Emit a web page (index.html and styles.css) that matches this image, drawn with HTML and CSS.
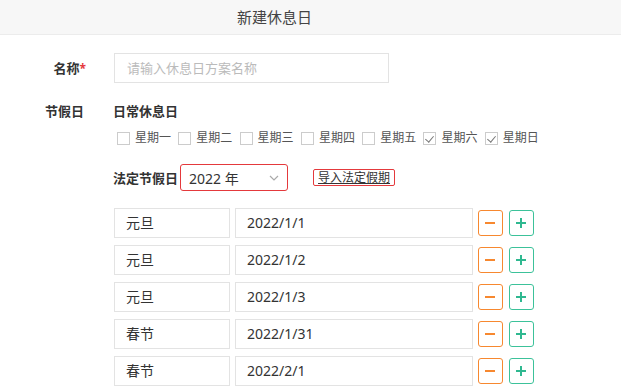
FILE: index.html
```html
<html>
    <head>
        <title>新建休息日</title>
        <link rel="stylesheet" href="styles.css">
    </head>
    <body>
        <div class="header">
            <h1>新建休息日</h1>
        </div>
        <div class="form">
            <div class="field">
                <label class="lbl">名称<span class="req">*</span></label>
                <input type="text" class="name-input" placeholder="请输入休息日方案名称">
            </div>

            <div class="field holiday">
                <label class="lbl">节假日</label>
                <div class="content">
                    <div class="sub">日常休息日</div>
                    <div class="weekdays">
                        <span class="day"><i class="box"></i>星期一</span>
                        <span class="day"><i class="box"></i>星期二</span>
                        <span class="day"><i class="box"></i>星期三</span>
                        <span class="day"><i class="box"></i>星期四</span>
                        <span class="day"><i class="box"></i>星期五</span>
                        <span class="day"><i class="box on"></i>星期六</span>
                        <span class="day"><i class="box on"></i>星期日</span>
                    </div>

                    <div class="legal">
                        <span class="sub">法定节假日</span>
                        <div class="select">
                            <span>2022 年</span>
                            <svg width="10" height="6" viewBox="0 0 10 6"><path d="M1 1l4 4 4-4" fill="none" stroke="#aaa" stroke-width="1.2"/></svg>
                        </div>
                        <a class="import" href="#">导入法定假期</a>
                    </div>

                    <div id="rows"></div>
                </div>
            </div>
        </div>

        <script>
            var days = [
                ["元旦", "2022/1/1"],
                ["元旦", "2022/1/2"],
                ["元旦", "2022/1/3"],
                ["春节", "2022/1/31"],
                ["春节", "2022/2/1"]
            ];
            var rows = document.getElementById("rows");
            days.forEach(function(d){
                var row = document.createElement("div");
                row.className = "row";
                row.innerHTML = '<div class="cell hname">' + d[0] + '</div>' +
                    '<div class="cell hdate">' + d[1] + '</div>' +
                    '<span class="btn minus"><i></i></span>' +
                    '<span class="btn plus"><i></i><i class="v"></i></span>';
                rows.appendChild(row);
            });
        </script>
    </body>
</html>
```

FILE: styles.css
```css
* {
    box-sizing: border-box;
}
body {
    margin: 0;
    background: #ffffff;
    font-family: "Noto Sans", "Noto Sans CJK SC", sans-serif;
    color: #333333;
}
.header {
    height: 35px;
    background-color: #f7f7f7;
    border-bottom: 1px solid #ececec;
    padding-left: 237px;
}
.header h1 {
    margin: 0;
    font-size: 15px;
    font-weight: normal;
    line-height: 34px;
    color: #444444;
}

/*Main*/
.form {
    padding-top: 18px;
}
.field {
    display: flex;
    align-items: flex-start;
}
.lbl {
    width: 86px;
    text-align: right;
    font-size: 13px;
    font-weight: bold;
    color: #333333;
    line-height: 30px;
    margin-right: 27px;
}
.req {
    color: #e4393c;
    font-size: 12px;
}
.name-input {
    width: 275px;
    height: 30px;
    border: 1px solid #e3e3e3;
    padding-left: 12px;
    font-family: inherit;
    font-size: 13px;
    margin-left: 1px;
}
.name-input::placeholder {
    color: #bbbbbb;
}

.holiday {
    margin-top: 17px;
}
.holiday .lbl {
    line-height: 20px;
    padding-right: 2px;
}
.content {
    display: flex;
    flex-direction: column;
}
.sub {
    font-size: 13px;
    font-weight: bold;
    line-height: 20px;
}
.weekdays {
    display: flex;
    margin-top: 7px;
    padding-left: 4px;
    line-height: 20px;
}
.day {
    display: flex;
    align-items: center;
    font-size: 12px;
    color: #555555;
    width: 61.3px;
}
.box {
    width: 13px;
    height: 13px;
    border: 1px solid #cccccc;
    margin-right: 5px;
    position: relative;
}
.box.on::after {
    content: "";
    position: absolute;
    left: 3px;
    top: 1px;
    width: 4px;
    height: 7px;
    border-right: 1.5px solid #777777;
    border-bottom: 1.5px solid #777777;
    transform: rotate(40deg);
}

.legal {
    display: flex;
    align-items: center;
    margin-top: 16px;
}
.select {
    width: 108px;
    height: 27px;
    margin-left: 2px;
    border: 1px solid #e4393c;
    border-radius: 3px;
    display: flex;
    align-items: center;
    justify-content: space-between;
    padding: 0 8px 0 8px;
    font-size: 14px;
    color: #333333;
}
.import {
    margin-left: 25px;
    border: 1px solid #e4393c;
    border-radius: 2px;
    padding: 0 4px;
    font-size: 12px;
    line-height: 15px;
    color: #333333;
    text-decoration: underline;
}

#rows {
    margin-top: 17px;
    margin-left: 1px;
}
.row {
    display: flex;
    align-items: center;
    margin-bottom: 7px;
}
.cell {
    height: 30px;
    border: 1px solid #e3e3e3;
    font-size: 14px;
    line-height: 28px;
    padding-left: 11px;
    color: #333333;
}
.hname {
    width: 116px;
}
.hdate {
    width: 238px;
    margin-left: 5px;
}
.btn {
    width: 25px;
    height: 26px;
    border-radius: 3px;
    position: relative;
}
.btn i {
    position: absolute;
    left: 6px;
    top: 10.5px;
    width: 10px;
    height: 2px;
}
.btn i.v {
    left: 10px;
    top: 6.5px;
    width: 2px;
    height: 10px;
}
.minus {
    margin-left: 5px;
    border: 1.5px solid #f7882f;
}
.minus i {
    background: #f7882f;
}
.plus {
    margin-left: 6px;
    border: 1.5px solid #3cc29a;
}
.plus i {
    background: #2fb890;
}
```
